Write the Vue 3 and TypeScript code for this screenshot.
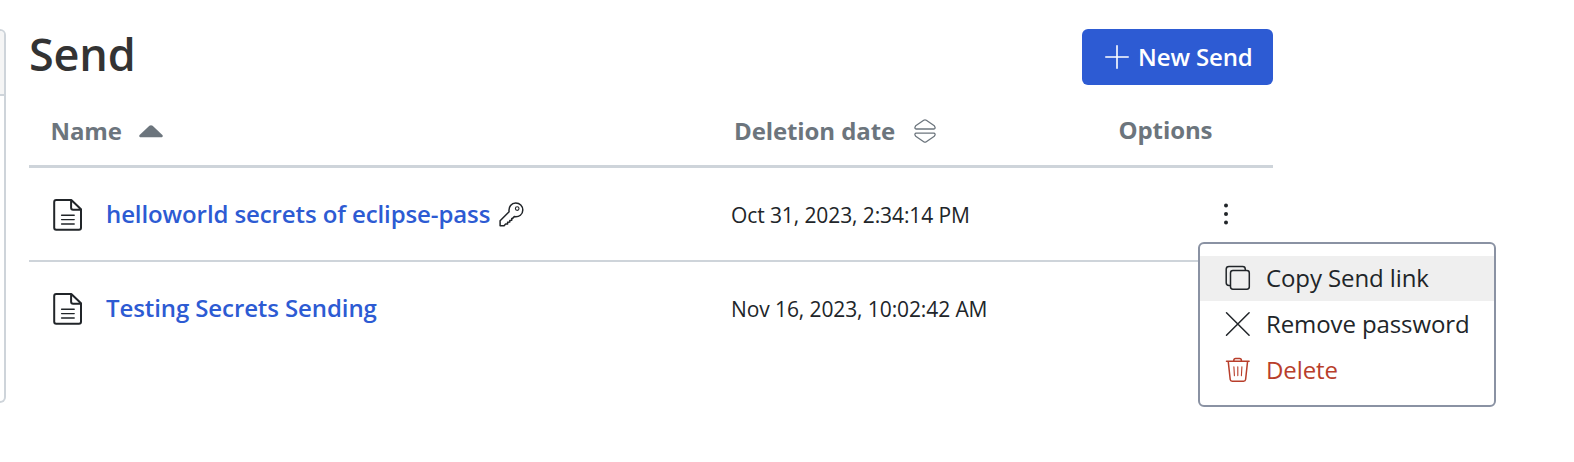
<script setup lang="ts">
interface SendItem {
  name: string
  date: string
  locked: boolean
}

const sends: SendItem[] = [
  { name: 'helloworld secrets of eclipse-pass', date: 'Oct 31, 2023, 2:34:14 PM', locked: true },
  { name: 'Testing Secrets Sending', date: 'Nov 16, 2023, 10:02:42 AM', locked: false },
]
</script>

<template>
  <div class="page">
    <aside class="filters"><div class="filters-head"></div></aside>
    <main class="content">
      <header class="title-bar">
        <h1>Send</h1>
        <button class="new-send" type="button">
          <svg width="24" height="24" viewBox="0 0 24 24" fill="none" stroke="currentColor" stroke-width="1.6" stroke-linecap="round"><path d="M12 .8v22.4M.8 12h22.4" /></svg>
          <span>New Send</span>
        </button>
      </header>

      <div class="row head">
        <div class="cell name">
          <span class="label-name">Name</span>
          <svg class="sort-up" width="24" height="13" viewBox="0 0 24 13" fill="currentColor"><path d="M1.2 12.3Q-.4 11.6.6 10L10.4.8Q12 -.5 13.6.8L23.4 10Q24.4 11.6 22.8 12.3Z" /></svg>
        </div>
        <div class="cell date">
          <span class="label-date">Deletion date</span>
          <svg class="sort-both" width="22" height="24" viewBox="0 0 22 24" fill="none" stroke="currentColor" stroke-width="1.3" stroke-linejoin="round"><path d="M2.1 10H19.9Q21.4 9.7 21 8.2L20.3 6.8L12.3 1.3Q11 .4 9.7 1.3L1.7 6.8L1 8.2Q.6 9.7 2.1 10ZM2.1 14.2H19.9Q21.4 14.5 21 16L20.3 17.2L12.3 22.7Q11 23.6 9.7 22.7L1.7 17.2L1 16Q.6 14.5 2.1 14.2Z" /></svg>
        </div>
        <div class="cell opts"><span class="label-options">Options</span></div>
      </div>

      <div v-for="(s, i) in sends" :key="s.name" class="row item">
        <div class="cell name">
          <svg class="doc" width="30" height="34" viewBox="0 0 30 34" fill="none" stroke="currentColor" stroke-width="2" stroke-linejoin="round"><path d="M3.2 2H18.3L28 11.3V29.8Q28 31.8 26 31.8H3.2Q1.2 31.8 1.2 29.8V4Q1.2 2 3.2 2ZM18.1 2.2V9.8Q18.1 11.8 20.1 11.8H27.8" /><path d="M8.6 17.2H21.2M8.6 21.6H21.2M8.6 26H21.2" stroke-width="1.4" stroke-linecap="round" /></svg>
          <a class="link">{{ s.name }}</a>
          <svg v-if="s.locked" class="key" width="25" height="25" viewBox="0 0 25 25" fill="none" stroke="currentColor" stroke-width="1.5" stroke-linejoin="round"><path d="M10.1 9.8C9.3 4.5 12.6 1 16.7 1C20.8 1 23.8 4 23.8 8C23.8 12.5 20.2 15.3 15.3 14.6L13.3 16.6L12.7 16.5V18.3L10.8 18.5V20L8.6 20.3V21.9L6.6 22L5.1 23.7H1.1V18.8Z" /><circle cx="18.2" cy="6.6" r="1.8" stroke-width="1.1" /></svg>
        </div>
        <div class="cell date"><span class="when">{{ s.date }}</span></div>
        <div class="cell opts">
          <svg v-if="i === 0" class="dots" width="6" height="22" viewBox="0 0 6 22" fill="currentColor"><circle cx="3" cy="2.4" r="2" /><circle cx="3" cy="11" r="2" /><circle cx="3" cy="19.5" r="2" /></svg>
        </div>
      </div>
    </main>

    <div class="menu">
      <div class="entry active">
        <svg width="26" height="26" viewBox="0 0 26 26" fill="none" stroke="currentColor" stroke-width="1.5"><rect x="5.5" y="5.5" width="18.8" height="18.7" rx="2.4" /><path d="M5.5 20.5H4Q1.2 20.5 1.2 17.8V4.2Q1.2 1.5 4 1.5H17.6Q20.3 1.5 20.3 4.2V5.5" /></svg>
        <span>Copy Send link</span>
      </div>
      <div class="entry">
        <svg width="26" height="26" viewBox="0 0 26 26" fill="none" stroke="currentColor" stroke-width="1.5" stroke-linecap="round"><path d="M1.5 1.7L24.1 24.3M24.1 1.7L1.5 24.3" /></svg>
        <span>Remove password</span>
      </div>
      <div class="entry danger">
        <svg width="26" height="26" viewBox="0 0 26 26" fill="none" stroke="currentColor" stroke-width="1.5" stroke-linecap="round" stroke-linejoin="round"><path d="M1.5 4.2H24.1M3.2 4.2L5.2 22.5Q5.4 24.3 7.2 24.3H18.6Q20.4 24.3 20.6 22.5L22.6 4.2M8.8 4V3.4Q8.8 1.6 10.6 1.6H14.6Q16.4 1.6 16.4 3.4V4" /><path d="M8.9 9.7L9.4 18.6M12.8 9.7V18.6M16.9 9.7L16.4 18.6" stroke-width="1.1" /></svg>
        <span>Delete</span>
      </div>
    </div>
  </div>
</template>

<style>
body {
  margin: 0;
  background: #fff;
}
</style>

<style scoped>
.page {
  position: relative;
  box-sizing: border-box;
  width: 1574px;
  height: 462px;
  padding-top: 29px;
  display: flex;
  overflow: hidden;
  background: #fff;
  color: #212529;
  font-family: "Open Sans", "Noto Sans", sans-serif;
}
svg {
  flex: none;
  display: block;
}
span,
.link {
  white-space: nowrap;
}
.filters {
  box-sizing: border-box;
  width: 6px;
  height: 374px;
  border: 2px solid #ced4da;
  border-left: 0;
  border-radius: 0 6px 6px 0;
  overflow: hidden;
}
.filters-head {
  height: 63px;
  background: #f5f5f5;
  border-bottom: 2px solid #ced4da;
}
.content {
  width: 1244px;
  margin-left: 23px;
}
.title-bar {
  display: flex;
  justify-content: space-between;
  height: 56px;
}
h1 {
  margin: 0;
  font-size: 45px;
  line-height: 50px;
  letter-spacing: -0.2px;
  font-weight: 600;
  color: #333;
}
.new-send {
  display: flex;
  align-items: center;
  gap: 9px;
  width: 191px;
  height: 56px;
  padding: 0 0 0 23px;
  border: 0;
  border-radius: 6px;
  background: #2d5bd3;
  color: #fff;
  font: 600 24px/56px "Open Sans", sans-serif;
  letter-spacing: -0.12px;
}
.row {
  display: grid;
  grid-template-columns: 702px 384px 158px;
}
.cell {
  display: flex;
  align-items: center;
}
.head {
  height: 80px;
  border-bottom: 3px solid #ced4da;
  color: #6c757d;
  font-size: 24px;
  letter-spacing: -0.1px;
  font-weight: 700;
}
.head .cell {
  height: 90px;
}
.head .name {
  padding-left: 21.5px;
}
.head .date {
  padding-left: 3px;
}
.sort-up {
  margin: 2px 0 0 17.5px;
}
.sort-both {
  margin: 2px 0 0 19px;
}
.head .opts {
  height: 88px;
  padding-left: 3.5px;
}
.item {
  height: 92px;
  border-bottom: 2px solid #ced4da;
}
.item:last-child {
  border-bottom: 0;
}
.item .name {
  padding-left: 24px;
}
.doc {
  margin-top: 2px;
}
.link {
  margin: 0 0 2px 23px;
  font-size: 24px;
  letter-spacing: -0.1px;
  font-weight: 600;
  color: #2d5bd3;
}
.key {
  margin-left: 9px;
}
.when {
  margin-top: 2px;
  font-size: 21px;
  letter-spacing: -0.1px;
}
.item .opts {
  padding-left: 108px;
}
.menu {
  position: absolute;
  left: 1198px;
  top: 242px;
  box-sizing: border-box;
  width: 298px;
  height: 165px;
  padding-top: 12px;
  border: 2px solid #8a92a3;
  border-radius: 6px;
  background: #fff;
  font-size: 24px;
  letter-spacing: -0.1px;
}
.entry {
  display: flex;
  box-sizing: border-box;
  align-items: center;
  gap: 15px;
  height: 45px;
  margin-bottom: 1px;
  padding: 0 0 2px 25px;
}
.entry svg {
  margin-top: 1px;
}
.active {
  background: #efefef;
}
.danger {
  color: #b83e2b;
}
</style>
